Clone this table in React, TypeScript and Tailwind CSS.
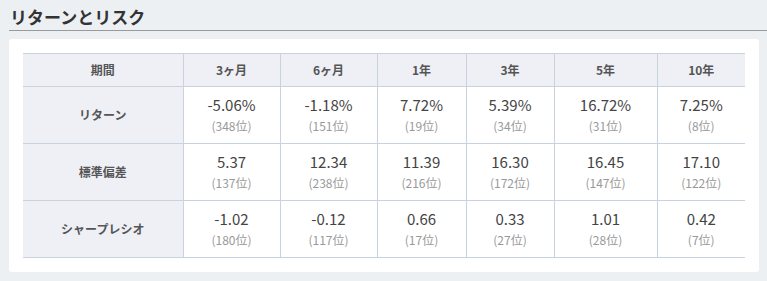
import React from "react";

const periods = ["3ヶ月", "6ヶ月", "1年", "3年", "5年", "10年"];
const widths = ["w-[97px]", "w-[97px]", "w-[89px]", "w-[88px]", "w-[103px]", "w-[88px]"];

const rows = [
  {
    label: "リターン",
    cells: [
      ["-5.06%", "348"],
      ["-1.18%", "151"],
      ["7.72%", "19"],
      ["5.39%", "34"],
      ["16.72%", "31"],
      ["7.25%", "8"],
    ],
  },
  {
    label: "標準偏差",
    cells: [
      ["5.37", "137"],
      ["12.34", "238"],
      ["11.39", "216"],
      ["16.30", "172"],
      ["16.45", "147"],
      ["17.10", "122"],
    ],
  },
  {
    label: "シャープレシオ",
    cells: [
      ["-1.02", "180"],
      ["-0.12", "117"],
      ["0.66", "17"],
      ["0.33", "27"],
      ["1.01", "28"],
      ["0.42", "7"],
    ],
  },
];

export default function App() {
  return (
    <div
      className="w-[767px] h-[281px] bg-[#edf0f3] pl-[9px] pr-[8px] pt-[4px]"
      style={{ fontFamily: '"Noto Sans CJK JP", "Noto Sans", sans-serif' }}
    >
      <h2 className="mr-[-8px] border-b border-[#9a9a9a] pl-px pb-[1px] text-[17px] leading-[25px] font-bold text-[#333]">
        リターンとリスク
      </h2>
      <div className="mt-[8px] rounded-[3px] bg-white p-[14px]">
        <table className="w-[722px] table-fixed border-collapse text-center">
          <thead>
            <tr className="h-[33px] bg-[#eef0f6] border-y border-[#c9d3e0]">
              <th className="w-[160px] border-r border-[#c9d3e0] text-[12px] font-bold text-[#555]">期間</th>
              {periods.map((p, i) => (
                <th
                  key={p}
                  className={`${widths[i]} ${i < 5 ? "border-r" : ""} border-[#c9d3e0] text-[12px] font-bold text-[#555]`}
                >
                  {p}
                </th>
              ))}
            </tr>
          </thead>
          <tbody>
            {rows.map((r) => (
              <tr key={r.label} className="h-[57px] border-b border-[#c9d3e0]">
                <td className="bg-[#eef0f6] border-r border-[#c9d3e0] text-[12px] font-bold text-[#555]">
                  {r.label}
                </td>
                {r.cells.map(([v, rank], i) => (
                  <td key={i} className={`${i < 5 ? "border-r" : ""} border-[#c9d3e0]`}>
                    <div className="text-[15px] leading-[22px] text-[#444]">{v}</div>
                    <div className="text-[12px] leading-[20px] text-[#999]">({rank}位)</div>
                  </td>
                ))}
              </tr>
            ))}
          </tbody>
        </table>
      </div>
    </div>
  );
}
